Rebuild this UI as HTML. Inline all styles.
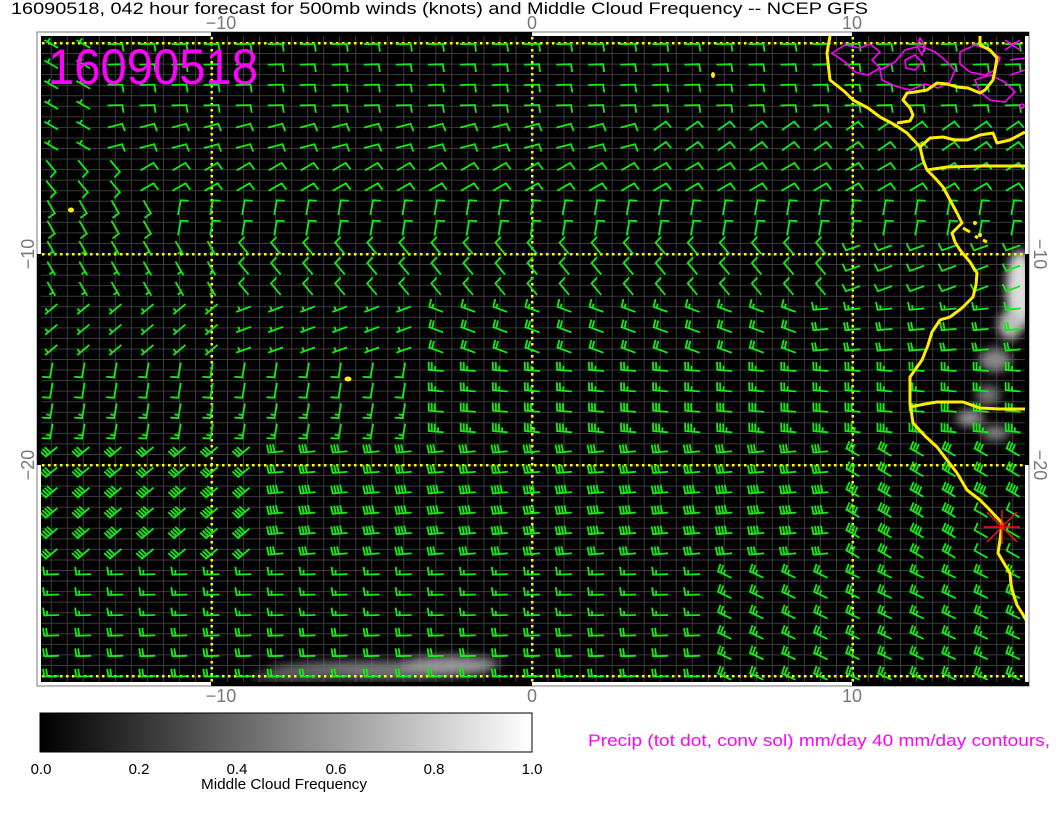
<!DOCTYPE html>
<html><head><meta charset="utf-8"><style>
html,body{margin:0;padding:0;background:#fff;width:1056px;height:816px;overflow:hidden}
svg{display:block}
text{font-family:"Liberation Sans",sans-serif}
</style></head><body>
<svg id="s" width="1056" height="816" viewBox="0 0 1056 816" xmlns="http://www.w3.org/2000/svg">
<defs>
<linearGradient id="cb" x1="0" x2="1" y1="0" y2="0"><stop offset="0" stop-color="#000"/><stop offset="1" stop-color="#fff"/></linearGradient>
<filter id="bl" x="-50%" y="-50%" width="200%" height="200%"><feGaussianBlur stdDeviation="5"/></filter>
<clipPath id="pc"><rect x="41" y="36" width="984" height="646"/></clipPath>
</defs>
<text x="11" y="14" font-size="17" fill="#000" textLength="857" lengthAdjust="spacingAndGlyphs">16090518, 042 hour forecast for 500mb winds (knots) and Middle Cloud Frequency -- NCEP GFS</text>
<g fill="#777" font-size="18">
<text x="221" y="29" text-anchor="middle">−10</text>
<text x="532" y="29" text-anchor="middle">0</text>
<text x="852" y="29" text-anchor="middle">10</text>
<text x="221" y="702" text-anchor="middle">−10</text>
<text x="532" y="702" text-anchor="middle">0</text>
<text x="852" y="702" text-anchor="middle">10</text>
<text transform="translate(34,254) rotate(-90)" text-anchor="middle">−10</text>
<text transform="translate(34,465) rotate(-90)" text-anchor="middle">−20</text>
<text transform="translate(1034,254) rotate(90)" text-anchor="middle">−10</text>
<text transform="translate(1034,465) rotate(90)" text-anchor="middle">−20</text>
</g>
<rect x="37" y="32" width="992" height="654" fill="#fff" stroke="#777" stroke-width="1"/>
<g fill="#000">
<rect x="211" y="32" width="321" height="4"/><rect x="852" y="32" width="177" height="4"/>
<rect x="211" y="682" width="321" height="4"/><rect x="852" y="682" width="177" height="4"/>
<rect x="37" y="254" width="4" height="211"/><rect x="1025" y="254" width="4" height="211"/>
</g>
<rect x="41" y="36" width="984" height="646" fill="#000"/>
<g id="plot" clip-path="url(#pc)">
<g id="grid" stroke="#3a3a3a" stroke-width="1"></g>
<g filter="url(#bl)" fill="#aaa">
<ellipse cx="380" cy="670" rx="110" ry="9" fill="#777"/>
<ellipse cx="450" cy="664" rx="50" ry="8" fill="#999"/>
<ellipse cx="300" cy="676" rx="50" ry="6" fill="#555"/>
<ellipse cx="1020" cy="290" rx="14" ry="40" fill="#ddd"/>
<ellipse cx="1010" cy="325" rx="12" ry="15" fill="#bbb"/>
<ellipse cx="995" cy="360" rx="16" ry="12" fill="#888"/>
<ellipse cx="988" cy="395" rx="12" ry="10" fill="#777"/>
<ellipse cx="970" cy="418" rx="14" ry="8" fill="#999"/>
<ellipse cx="995" cy="433" rx="14" ry="7" fill="#888"/>
</g>
<g id="dots" fill="#ff0"></g>
<g id="barbs" stroke="#11ee11" stroke-width="1.8" fill="none" stroke-linecap="square"></g>
<g stroke="#ff00ff" stroke-width="1.6" fill="none">
<path d="M832,53 L845,45 L860,48 L870,44 L880,52 L872,60 L880,68 L868,75 L855,72 L845,62 Z"/>
<path d="M880,70 L895,62 L905,50 L920,46 L935,52 L945,60 L955,70 L950,82 L938,88 L925,84 L910,90 L895,86 L882,80 Z"/>
<path d="M905,60 L915,55 L922,62 L915,70 L906,68 Z"/>
<path d="M960,52 L975,45 L990,50 L1000,58 L995,70 L985,75 L970,72 L960,64 Z"/>
<path d="M975,80 L990,75 L1005,82 L1015,92 L1005,102 L990,100 L980,92 Z"/>
<path d="M917,46 L920,38 L925,46 L922,55 Z"/>
<path d="M1005,40 L1020,50 M1005,50 L1020,40"/>
<path d="M1010,60 L1025,58 M1010,75 L1025,70"/>
<circle cx="1022" cy="106" r="2"/>
</g>
<g stroke="#ffee00" stroke-width="3" fill="none" stroke-linejoin="round">
<path d="M830,36 L827,53 L830,80 L845,92 L853,100 L868,108 L880,117 L895,125 L907,133 L920,147 L923,160 L927,170 L935,178 L943,187 L950,200 L957,213 L962,223 L952,233 L955,242 L960,250 L970,262 L977,273 L976,285 L973,297 L962,308 L950,317 L940,320 L932,332 L928,345 L922,360 L910,377 L910,390 L910,403 L913,423 L925,436 L937,447 L947,460 L957,473 L967,490 L980,500 L987,507 L1002,523 L1000,540 L998,553 L1005,565 L1010,573 L1011,585 L1013,593 L1017,605 L1022,613 L1026,620"/>
<path d="M980,36 L980,45 L990,50 L997,58 L995,70 L993,80 L985,90 L980,93 L968,88 L957,87 L947,84 L937,83 L927,90 L915,92 L907,93 L903,100 L910,108 L913,115 L910,121 L897,123"/>
<path d="M920,147 L930,138 L943,137 L955,140 L967,140 L980,135 L993,133 L997,143 L1010,140 L1025,132"/>
<path d="M927,170 L947,167 L980,166 L1025,166"/>
<path d="M910,407 L925,404 L937,402 L963,402 L980,408 L1000,409 L1025,409"/>
<path d="M963,228 L970,232 M975,236 L978,238 M983,240 L987,242"/>
</g>
<g fill="#ffee00"><ellipse cx="71" cy="210" rx="3" ry="2.5"/><ellipse cx="348" cy="379" rx="3.5" ry="2.5"/><ellipse cx="713" cy="75" rx="2" ry="3"/><circle cx="980" cy="235" r="2"/><circle cx="975" cy="223" r="2"/></g>
<g stroke="#ff1010" stroke-width="1.5"><path d="M987,512 L1017,542 M987,542 L1017,512 M984,527 L1020,527 M1002,510 L1002,544"/></g>
</g>
<text x="48" y="84" font-size="50" fill="#ff00ff" textLength="210" lengthAdjust="spacingAndGlyphs">16090518</text>
<rect x="40" y="713" width="492" height="39" fill="url(#cb)" stroke="#000" stroke-width="1"/>
<g font-size="15" fill="#000" text-anchor="middle">
<text x="41" y="774">0.0</text><text x="139" y="774">0.2</text><text x="237" y="774">0.4</text><text x="336" y="774">0.6</text><text x="434" y="774">0.8</text><text x="532" y="774">1.0</text>
<text x="284" y="789" textLength="166" lengthAdjust="spacingAndGlyphs">Middle Cloud Frequency</text>
</g>
<text x="588" y="746" font-size="17" fill="#ff00ff" textLength="462" lengthAdjust="spacingAndGlyphs">Precip (tot dot, conv sol) mm/day 40 mm/day contours,</text>
</svg>
<script>
var NS="http://www.w3.org/2000/svg";
function el(t,a,p){var e=document.createElementNS(NS,t);for(var k in a)e.setAttribute(k,a[k]);p.appendChild(e);return e;}
var X=function(lon){return 532+lon*32.05;}, Y=function(lat){return 254-(lat+10)*21.1;};
var g=document.getElementById('grid');
for(var x=532-16.025*32;x<1030;x+=16.025){if(x>40)el('line',{x1:x,y1:36,x2:x,y2:682},g);}
for(var y=254-10.55*22;y<690;y+=10.55){if(y>36)el('line',{x1:41,y1:y,x2:1025,y2:y},g);}
var d=document.getElementById('dots');
[0,-10,-20,-30].forEach(function(lat){var yy=Y(lat);for(var x=42;x<1025;x+=6)el('rect',{x:x,y:yy-1,width:2.5,height:2.5},d);});
[-10,0,10].forEach(function(lon){var xx=X(lon);for(var y=37;y<682;y+=6)el('rect',{x:xx-1,y:y,width:2.5,height:2.5},d);});
function wind(lat,lon){
 if(lat>-5.5){ if(lon<-13) return [300,5]; if(lat<-3.5) return [lon>3?55:75,10]; return [88,10];}
 if(lat>-7.5) return [lon<-12?140:60,10];
 if(lat>-9.5) return [lon<-11?150:10,10];
 if(lat>-12) return [lon<-9?150:(lon>9?250:320),lon<-9?5:10];
 if(lat>-15){ if(lon<-9) return [230,8]; if(lon<-3) return [250,8]; return [lon>8?265:290,15+(lat<-13.5?5:0)];}
 if(lat>-19){ if(lon<-3) return [190,10+(lat<-17?5:0)]; return [275,20+Math.round(-(lat+15))*5];}
 if(lat>-25){ var dd=lon<-8?230:(lon>9?300:265); var s=30+((lat<-21&&lat>-24)?10:0); if(lon>13&&lat<-22) s=10; return [dd,s];}
 return [lon>5?295:268, lon>5?25:15+(lat<-28?5:0)];
}
var b=document.getElementById('barbs');
for(var i=0;i<32;i++){var cy=44+i*20.4, lat=-(cy-43)/21.1;
 for(var j=0;j<31;j++){var lon=-15+j;
 var cx=X(lon); if(cx>1020) continue;
 var w=wind(lat,lon), r=w[0]*Math.PI/180, s=w[1];
 var vx=Math.sin(r), vy=-Math.cos(r), px=-vy, py=vx;
 var sx=cx-vx*7, sy=cy-vy*7, tx=cx+vx*7, ty=cy+vy*7;
 var p="M"+sx.toFixed(1)+","+sy.toFixed(1)+"L"+tx.toFixed(1)+","+ty.toFixed(1);
 var n=Math.floor(s/10), h=(s%10)>=5, k=0;
 for(var m=0;m<n;m++,k++){var bx=tx-vx*3*k, by=ty-vy*3*k;p+="M"+bx.toFixed(1)+","+by.toFixed(1)+"L"+(bx+px*7+vx*0.8).toFixed(1)+","+(by+py*7+vy*0.8).toFixed(1);}
 if(h){if(n==0)k=1;var bx=tx-vx*3*k, by=ty-vy*3*k;p+="M"+bx.toFixed(1)+","+by.toFixed(1)+"L"+(bx+px*3.5).toFixed(1)+","+(by+py*3.5).toFixed(1);}
 el('path',{d:p},b);
}}
</script>
</body></html>
